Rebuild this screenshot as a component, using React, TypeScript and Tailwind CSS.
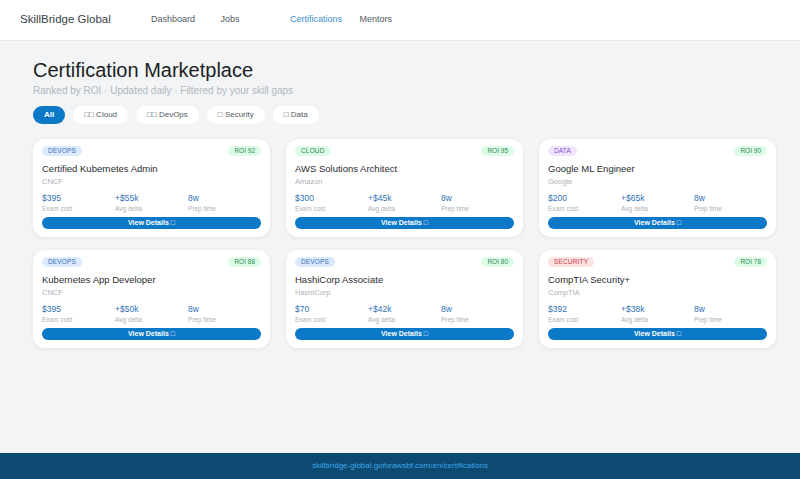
const navItems = ["Dashboard", "Jobs", "Certifications", "Mentors"];

const filters = ["All", "□□ Cloud", "□□ DevOps", "□ Security", "□ Data"];

type Cert = {
  track: "DEVOPS" | "CLOUD" | "DATA" | "SECURITY";
  roi: number;
  name: string;
  vendor: string;
  cost: string;
  delta: string;
  prep: string;
};

const certs: Cert[] = [
  { track: "DEVOPS", roi: 92, name: "Certified Kubernetes Admin", vendor: "CNCF", cost: "$395", delta: "+$55k", prep: "8w" },
  { track: "CLOUD", roi: 95, name: "AWS Solutions Architect", vendor: "Amazon", cost: "$300", delta: "+$45k", prep: "8w" },
  { track: "DATA", roi: 90, name: "Google ML Engineer", vendor: "Google", cost: "$200", delta: "+$65k", prep: "8w" },
  { track: "DEVOPS", roi: 88, name: "Kubernetes App Developer", vendor: "CNCF", cost: "$395", delta: "+$50k", prep: "8w" },
  { track: "DEVOPS", roi: 80, name: "HashiCorp Associate", vendor: "HashiCorp", cost: "$70", delta: "+$42k", prep: "8w" },
  { track: "SECURITY", roi: 78, name: "CompTIA Security+", vendor: "CompTIA", cost: "$392", delta: "+$38k", prep: "8w" },
];

const trackStyles: Record<Cert["track"], string> = {
  DEVOPS: "bg-[#dbeafe] text-[#3b6fb6]",
  CLOUD: "bg-[#dcfce7] text-[#2f8a52]",
  DATA: "bg-[#f0e4fd] text-[#8b4fcf]",
  SECURITY: "bg-[#fde2e2] text-[#c2414a]",
};

function Stat({ value, label }: { value: string; label: string }) {
  return (
    <div className="flex flex-col">
      <span className="text-[8.5px] leading-[11px] text-[#3173b5]">{value}</span>
      <span className="text-[6.5px] leading-[9px] text-[#adb2b8]">{label}</span>
    </div>
  );
}

function CertCard({ cert }: { cert: Cert }) {
  return (
    <div className="bg-white rounded-xl shadow-[0_1px_4px_rgba(0,0,0,0.07)] px-[9px] pt-[7px] pb-[8px] flex flex-col">
      <div className="flex items-center justify-between">
        <span className={`rounded-full px-[6px] h-[10px] flex items-center text-[6.5px] tracking-wide ${trackStyles[cert.track]}`}>
          {cert.track}
        </span>
        <span className="rounded-full px-[6px] h-[10px] flex items-center text-[6.5px] bg-[#dcfce7] text-[#2f8a52]">
          ROI {cert.roi}
        </span>
      </div>
      <div className="mt-[7px] text-[9.5px] leading-[12px] text-[#2a2d31]">{cert.name}</div>
      <div className="mt-[2px] text-[7.5px] leading-[10px] text-[#adb2b8]">{cert.vendor}</div>
      <div className="mt-[6px] grid grid-cols-3">
        <Stat value={cert.cost} label="Exam cost" />
        <Stat value={cert.delta} label="Avg delta" />
        <Stat value={cert.prep} label="Prep time" />
      </div>
      <button className="mt-[4px] h-[12px] w-full rounded-full bg-[#0b78c8] text-white text-[7px] font-bold flex items-center justify-center">
        View Details □
      </button>
    </div>
  );
}

export default function App() {
  return (
    <div className="min-h-screen flex flex-col bg-[#f2f4f6] font-['Liberation_Sans',Arial,sans-serif]">
      <header className="h-[41px] bg-white border-b border-[#e8eaed] flex items-center pl-[20px]">
        <span className="text-[11.5px] text-[#3a4149] w-[131px]">SkillBridge Global</span>
        <nav className="flex">
          {navItems.map((item) => (
            <span
              key={item}
              className={`w-[69.5px] text-[9px] ${item === "Certifications" ? "text-[#3b8fd0]" : "text-[#525a64]"}`}
            >
              {item}
            </span>
          ))}
        </nav>
      </header>

      <main className="flex-1 pl-[33px] pr-[24px] pt-[17px]">
        <h1 className="text-[20px] leading-[24px] text-[#1c1f23]">Certification Marketplace</h1>
        <p className="mt-[2px] text-[10px] leading-[13px] text-[#b3b8bf]">
          Ranked by ROI · Updated daily · Filtered by your skill gaps
        </p>
        <div className="mt-[9px] flex gap-[8px]">
          {filters.map((f) => (
            <span
              key={f}
              className={`h-[18px] rounded-full flex items-center text-[8px] px-[11px] ${
                f === "All" ? "bg-[#0b78c8] text-white font-bold" : "bg-white text-[#525a64]"
              }`}
            >
              {f}
            </span>
          ))}
        </div>
        <div className="mt-[15px] grid grid-cols-3 gap-x-4 gap-y-[13px]">
          {certs.map((c) => (
            <CertCard key={c.name} cert={c} />
          ))}
        </div>
      </main>

      <footer className="h-[26px] bg-[#0c4a71] flex items-center justify-center">
        <span className="text-[8px] text-[#3ea6e6]">skillbridge-global.goforawsbf.com/en/certifications</span>
      </footer>
    </div>
  );
}
